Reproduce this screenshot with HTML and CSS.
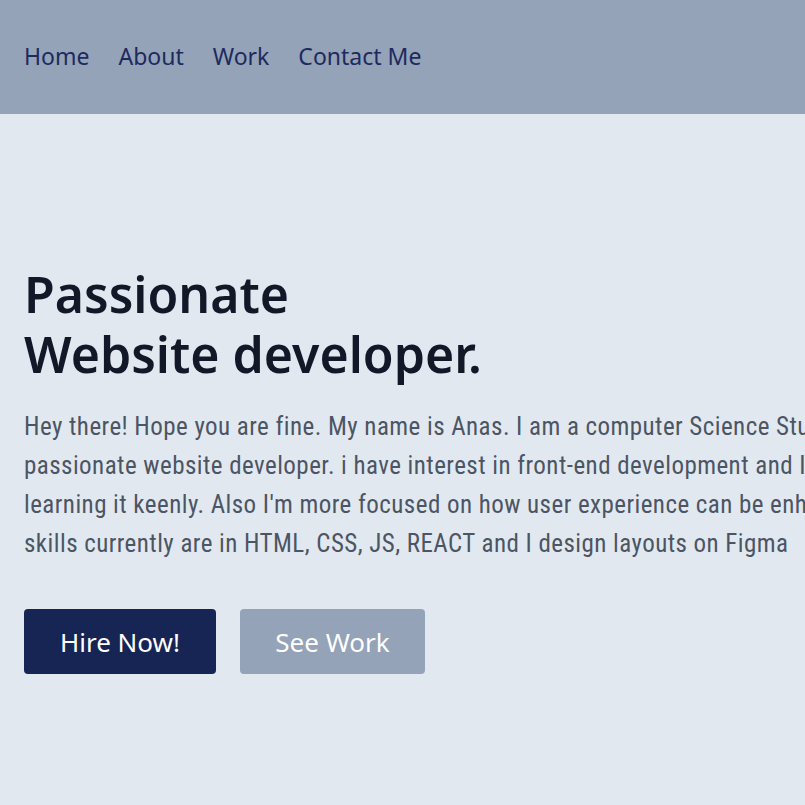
FILE: index.html
```html
<!DOCTYPE html>
<html lang="en">
<head>
<meta charset="utf-8">
<title>Anas - Website developer</title>
<link rel="stylesheet" href="styles.css">
</head>
<body>
<header class="site-header">
  <nav class="nav">
    <a class="nav-link" href="#">Home</a>
    <a class="nav-link" href="#">About</a>
    <a class="nav-link" href="#">Work</a>
    <a class="nav-link" href="#">Contact Me</a>
  </nav>
</header>
<main class="hero">
  <h1 class="hero-title">Passionate<br>Website developer.</h1>
  <p class="hero-text">Hey there! Hope you are fine. My name is Anas. I am a computer Science Student and a<br>passionate website developer. i have interest in front-end development and I am<br>learning it keenly. Also I'm more focused on how user experience can be enhanced. My<br>skills currently are in HTML, CSS, JS, REACT and I design layouts on Figma</p>
  <div class="actions">
    <a class="btn btn-primary" href="#">Hire Now!</a>
    <a class="btn btn-secondary" href="#">See Work</a>
  </div>
</main>
</body>
</html>
```
FILE: styles.css
```css
* { box-sizing: border-box; }
html, body { margin: 0; padding: 0; }
body {
  background: #e2e8f0;
  font-family: "Noto Sans", "Open Sans", sans-serif;
  overflow: hidden;
  width: 805px;
  height: 805px;
}
.site-header {
  background: #94a3b8;
  height: 114px;
  display: flex;
  align-items: center;
  padding: 0 24px;
}
.nav {
  display: flex;
  gap: 29px;
}
.nav-link {
  color: #1e2a5e;
  text-decoration: none;
  font-size: 23px;
  line-height: 1;
  margin-top: -2px;
}
.hero {
  padding: 150px 24px 0;
}
.hero-title {
  margin: 0;
  font-size: 50px;
  line-height: 60px;
  font-weight: 600;
  color: #111827;
}
.hero-text {
  margin: 23px 0 0;
  white-space: nowrap;
  font-family: "Roboto Condensed", "Liberation Sans Narrow", "Liberation Sans", sans-serif;
  font-size: 25px;
  letter-spacing: 0.45px;
  line-height: 39px;
  color: #4b5563;
}
.actions {
  display: flex;
  gap: 24px;
  margin-top: 46px;
}
.btn {
  display: flex;
  align-items: center;
  justify-content: center;
  height: 65px;
  border-radius: 4px;
  color: #fff;
  text-decoration: none;
  font-size: 26px;
}
.btn-primary { background: #172554; width: 192px; }
.btn-secondary { background: #94a3b8; width: 185px; }
```
